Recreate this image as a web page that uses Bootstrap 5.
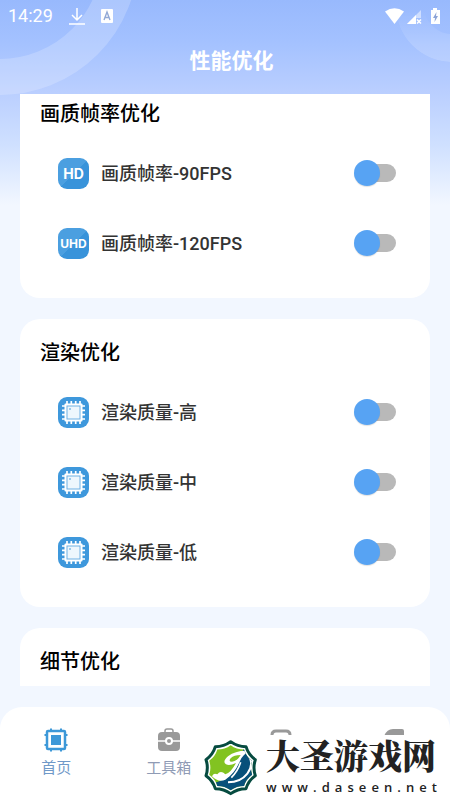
<!DOCTYPE html>
<html lang="zh-CN">
<head>
<meta charset="utf-8">
<meta name="viewport" content="width=device-width, initial-scale=1">
<title>性能优化</title>
<link href="https://cdn.jsdelivr.net/npm/bootstrap@5.3.0/dist/css/bootstrap.min.css" rel="stylesheet">
<style>
body{font-family:Roboto,"Noto Sans CJK SC",sans-serif;background:#f2f7ff linear-gradient(#98b9fd 0,#a3c1ff 40px,#b9ceff 90px,#cfe0ff 145px,#f2f7ff 205px) no-repeat;color:#000}
.deco{position:absolute;inset:0 0 auto 0;width:100%;height:100px;overflow:hidden;pointer-events:none}
.ring{position:absolute;border-radius:50%;border:36px solid rgba(255,255,255,.2)}
.ring-l{width:276px;height:276px;left:-138px;top:-181px}
.ring-r{width:112px;height:112px;right:-58px;top:-50px;border-width:28px;border-color:rgba(255,255,255,.16);-webkit-mask-image:linear-gradient(transparent 60px,#000 95px);mask-image:linear-gradient(transparent 60px,#000 95px)}
.status{height:32px;color:#fff;font-size:18px;line-height:32px;padding:0 8px}
.page-title{font-size:21px;line-height:30px;font-weight:700;color:#fff;padding:14px 0 18px;margin:0 0 0 13px}
.feed{padding:0 20px;gap:21px}
.panel{background:#fff;border-radius:20px;padding:19px 32px 20px 20px}
.panel-first{border-radius:0 0 20px 20px;padding-top:5px}
.panel-last{border-radius:20px 20px 0 0;padding-bottom:9px}
.panel h2{font-size:20px;line-height:30px;font-weight:500;margin:0}
.opts{padding:9px 0 0 18px}
.opt{height:70px;gap:12px}
.opt svg{width:31px;height:31px;flex:none}
.opt label{font-size:18px;line-height:28px;padding-top:2px;font-weight:500;color:#333;flex:1}
.toggle{appearance:none;width:44px;height:28px;margin:0;position:relative;background:none;border:0}
.toggle::before{content:"";position:absolute;left:4px;right:2px;top:5px;height:18px;border-radius:9px;background:#b9b9b9}
.toggle::after{content:"";position:absolute;left:0;top:1px;width:26px;height:26px;border-radius:50%;background:#57a3f3;box-shadow:0 1px 1px rgba(0,0,0,.12)}
.toggle:checked::after{left:17px}
.tabs{background:#fff;border-radius:22px 22px 0 0;height:93px;padding-top:20px;margin-top:21px}
.tab{color:#8f9bb5;text-decoration:none;font-size:15px;line-height:22px;gap:4px;flex:1}
.tab.on{color:#7099c8}
.tab svg{width:26px;height:26px}
.brand{position:absolute;left:202px;right:8px;bottom:2px;height:63px;gap:6px;color:#222}
.brand-mark{width:58px;height:58px;flex:none}
.brand-box{background:#fff;flex:1;height:63px;padding-right:5px}
.brand-name{font:900 34px/40px "Noto Serif CJK SC","Noto Sans CJK SC",serif;white-space:nowrap}
.brand-url{font:600 13px/16px "Open Sans",sans-serif;padding-top:4px}
</style>
</head>
<body>
<svg width="0" height="0" class="position-absolute" aria-hidden="true">
<defs><linearGradient id="g" x1="0" y1="0" x2="1" y2="1"><stop offset=".5" stop-color="#4b9fe0"/><stop offset=".5" stop-color="#3893da"/></linearGradient></defs>
<symbol id="chip" viewBox="0 0 31 31"><rect width="31" height="31" rx="9" fill="#3e98dc"/><path d="M9 4v23M13.300 4v23M17.700 4v23M22 4v23M4 9h23M4 13.300h23M4 17.700h23M4 22h23" stroke="#fff" stroke-width="1.700"/><rect x="6.500" y="6.500" width="18" height="18" rx="1" fill="#fff"/><rect x="9" y="9" width="13" height="13" fill="#eef7fd" stroke="#6fb1e4"/><circle cx="12" cy="12" r=".8" fill="#3494dc"/></symbol>
</svg>
<div class="deco" aria-hidden="true"><div class="ring ring-l"></div><div class="ring ring-r"></div></div>
<div class="d-flex flex-column min-vh-100 position-relative">
<header>
<div class="status d-flex align-items-center justify-content-between">
<div class="d-flex align-items-center gap-3"><span>14:29</span>
<svg width="16" height="18" viewBox="0 0 16 18" fill="none" stroke="#fff" stroke-width="1.500"><path d="M8 1v12M3 8l5 5 5-5M0 17h16"/></svg>
<svg width="12" height="14" viewBox="0 0 12 14"><rect width="12" height="14" rx="1" fill="#fff"/><path d="M3 11l3-8 3 8M4 8.500h4" fill="none" stroke="#92a9d6" stroke-width="1.400"/></svg></div>
<svg width="58" height="20" viewBox="0 0 58 20"><path d="M1 5.500Q10.500 -1 20 5.500L10.500 18Z" fill="#fff"/><path d="M23 18L37 4V12H32V18Z" fill="#fff" opacity=".5"/><path d="M23 18L32 9V18Z" fill="#fff"/><path d="M33 13.500l4 4m0-4l-4 4" stroke="#fff" stroke-width="1.500"/><path d="M49 2h4v2h3v14H47V4h2Z" fill="#fff"/><path d="M52.500 6L49 12h2l-.5 4 3.500-6h-2Z" fill="#8da4d6"/></svg>
</div>
<h1 class="page-title text-center">性能优化</h1>
</header>
<main class="feed d-flex flex-column flex-grow-1">
<section class="panel panel-first"><h2>画质帧率优化</h2>
<div class="opts">
<div class="opt d-flex align-items-center"><svg viewBox="0 0 31 31" aria-hidden="true"><rect width="31" height="31" rx="9" fill="url(#g)"/><text x="15.500" y="20.500" text-anchor="middle" font-family="Inter" font-weight="700" font-size="14" fill="#fff">HD</text></svg><label for="s1">画质帧率-90FPS</label><input class="toggle" type="checkbox" role="switch" id="s1"></div>
<div class="opt d-flex align-items-center"><svg viewBox="0 0 31 31" aria-hidden="true"><rect width="31" height="31" rx="9" fill="url(#g)"/><text x="15.500" y="20" text-anchor="middle" font-family="Inter" font-weight="700" font-size="12" fill="#fff">UHD</text></svg><label for="s2">画质帧率-120FPS</label><input class="toggle" type="checkbox" role="switch" id="s2"></div>
</div></section>
<section class="panel"><h2>渲染优化</h2>
<div class="opts">
<div class="opt d-flex align-items-center"><svg aria-hidden="true"><use href="#chip"/></svg><label for="s3">渲染质量-高</label><input class="toggle" type="checkbox" role="switch" id="s3"></div>
<div class="opt d-flex align-items-center"><svg aria-hidden="true"><use href="#chip"/></svg><label for="s4">渲染质量-中</label><input class="toggle" type="checkbox" role="switch" id="s4"></div>
<div class="opt d-flex align-items-center"><svg aria-hidden="true"><use href="#chip"/></svg><label for="s5">渲染质量-低</label><input class="toggle" type="checkbox" role="switch" id="s5"></div>
</div></section>
<section class="panel panel-last"><h2>细节优化</h2></section>
</main>
<nav class="tabs d-flex position-relative" aria-label="主导航">
<a href="#" class="tab on d-flex flex-column align-items-center"><svg viewBox="0 0 26 26"><path d="M8 1.500v23M18 1.500v23M1.500 8h23M1.500 18h23" stroke="#3d98d8" stroke-width="2"/><rect x="4" y="4" width="18" height="18" rx="1" fill="#fff" stroke="#3d98d8" stroke-width="2.500"/><rect x="8" y="8" width="10" height="10" fill="#3d98d8"/></svg>首页</a>
<a href="#" class="tab d-flex flex-column align-items-center"><svg viewBox="0 0 26 26"><path d="M9 6V4q0-2 2-2h4q2 0 2 2v2" fill="none" stroke="#999" stroke-width="1.500"/><rect x="2" y="5" width="22" height="19" rx="4" fill="#999"/><path d="M2 14h22" stroke="#fff" stroke-width="1.500"/><circle cx="13" cy="14" r="3" fill="#999" stroke="#fff" stroke-width="2"/></svg>工具箱</a>
<a href="#" class="tab d-flex flex-column align-items-center" aria-label="应用"><svg viewBox="0 0 26 26"><path d="M4 12V8q0-4 4-4h10q4 0 4 4v4" fill="none" stroke="#999" stroke-width="3"/></svg></a>
<a href="#" class="tab d-flex flex-column align-items-center" aria-label="更多"><svg viewBox="0 0 26 26"><path d="M3 9Q6 2 12 2h9q2 0 2 2v5Z" fill="#999"/></svg></a>
<div class="brand d-flex align-items-center">
<svg class="brand-mark" viewBox="6 9 174 174" aria-hidden="true">
<defs><path id="deca" d="M92 20Q112 35 138 35Q145 59 166 74Q158 98 166 122Q145 137 138 161Q112 161 92 176Q72 161 46 161Q39 137 18 122Q26 98 18 74Q39 59 46 35Q72 35 92 20Z"/>
<clipPath id="seal"><use href="#deca" transform="translate(12 13) scale(.87)"/></clipPath></defs>
<use href="#deca" fill="#fff" stroke="#064b40" stroke-width="9" stroke-linejoin="round"/>
<g clip-path="url(#seal)"><rect width="186" height="186" fill="#82c321"/>
<path d="M136 30H186V186H30V146Q66 142 88 118Q112 90 136 30Z" fill="#07507a"/>
<path d="M140 54Q166 84 142 116Q122 142 84 142" fill="none" stroke="#fff" stroke-width="6"/>
<path d="M150 48Q110 44 84 64Q66 80 78 88Q88 94 108 84Q92 114 76 118Q62 104 52 118Q40 112 36 124Q56 144 76 134Q104 116 120 78Q128 58 150 48ZM122 60Q112 78 96 80Q84 80 92 70Q102 60 122 60Z" fill="#fff" fill-rule="evenodd"/>
<path d="M122 82Q114 108 94 128" fill="none" stroke="#fff" stroke-width="5"/></g></svg>
<div class="brand-box"><div class="brand-name">大圣游戏网</div><div class="brand-url d-flex justify-content-between"><span>w</span><span>w</span><span>w</span><span>.</span><span>d</span><span>a</span><span>s</span><span>e</span><span>e</span><span>n</span><span>.</span><span>n</span><span>e</span><span>t</span></div></div>
</div>
</nav>
</div>
<script src="https://cdn.jsdelivr.net/npm/bootstrap@5.3.0/dist/js/bootstrap.bundle.min.js"></script>
</body>
</html>
